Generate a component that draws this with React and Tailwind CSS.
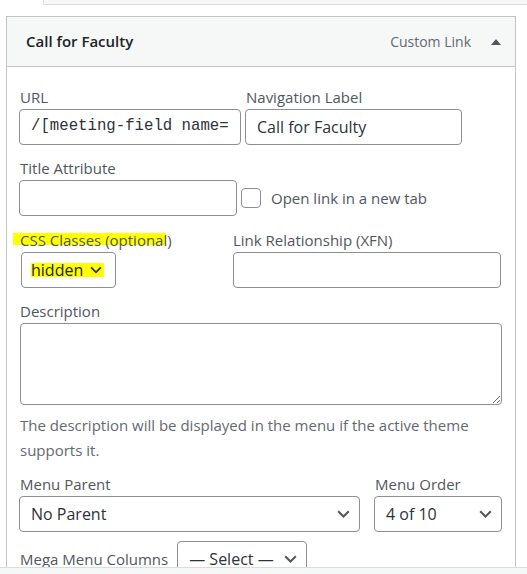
function Chevron({ className = '' }) {
  return (
    <svg width="13" height="8" viewBox="0 0 13 8" className={className} fill="none">
      <polyline points="1.2,1.2 6.5,6.5 11.8,1.2" stroke="currentColor" strokeWidth="2" />
    </svg>
  );
}

function Label({ children, className = '' }) {
  return <div className={`h-[24px] leading-[24px] text-[15px] text-[#50575e] ${className}`}>{children}</div>;
}

function TextBox({ className = '', children, mono = false }) {
  return (
    <div
      className={`h-[36px] rounded-[4px] border border-[#8c8f94] bg-white flex items-center pl-[11px] overflow-hidden whitespace-nowrap text-[#2c3338] ${
        mono ? "font-['Liberation_Mono',monospace] text-[15.7px]" : 'text-[16px]'
      } ${className}`}
    >
      {children}
    </div>
  );
}

function SelectBox({ value, className = '', chevronClass = 'text-[#50575e]' }) {
  return (
    <div
      className={`h-[36px] rounded-[4px] border border-[#8c8f94] bg-white flex items-center justify-between pl-[11px] pr-[9px] text-[16px] text-[#2c3338] whitespace-nowrap ${className}`}
    >
      <span>{value}</span>
      <Chevron className={chevronClass} />
    </div>
  );
}

export default function App() {
  return (
    <div className="relative w-[527px] h-[574px] overflow-hidden bg-white font-['Open_Sans',sans-serif]">
      {/* previous item edge */}
      <div className="ml-[43px] h-[5px] bg-[#f6f7f7] border-l border-b border-[#dcdcde]" />

      <div className="ml-[6px] mt-[11px] w-[510px] border border-[#c3c4c7]">
        {/* header */}
        <div className="h-[50px] bg-[#f6f7f7] border-b border-[#c3c4c7] flex items-center pl-[19px] pr-[14px]">
          <span className="text-[15px] font-semibold text-[#1d2327]">Call for Faculty</span>
          <span className="ml-auto text-[14px] text-[#646970]">Custom Link</span>
          <span className="ml-[20px] w-0 h-0 border-l-[5px] border-r-[5px] border-b-[6px] border-l-transparent border-r-transparent border-b-[#50575e]" />
        </div>

        {/* body */}
        <div className="pl-[12px] pt-[18px] pb-[40px]">
          <div className="flex gap-[4px]">
            <div className="w-[222px]">
              <Label className="ml-px">URL</Label>
              <TextBox mono>/[meeting-field name=</TextBox>
            </div>
            <div className="w-[217px]">
              <Label className="ml-px">Navigation Label</Label>
              <TextBox>Call for Faculty</TextBox>
            </div>
          </div>

          <div className="mt-[11px]">
            <Label className="ml-px">Title Attribute</Label>
            <div className="flex items-center">
              <TextBox className="w-[218px]" />
              <div className="ml-[4px] w-[20px] h-[20px] rounded-[4px] border border-[#8c8f94] bg-white" />
              <span className="ml-[10px] text-[15px] text-[#50575e]">Open link in a new tab</span>
            </div>
          </div>

          <div className="mt-[12px] flex">
            <div className="w-[214px]">
              <div className="relative ml-px">
                <div className="absolute left-[-7px] top-[5px] w-[153px] h-[12px] bg-[#ffff00]" />
                <Label className="relative">CSS Classes (optional)</Label>
              </div>
              <div className="relative ml-[2px] w-[95px] h-[36px] rounded-[4px] border border-[#8c8f94] bg-white">
                <div className="absolute left-[9px] top-[10px] w-[73px] h-[14px] bg-[#ffff00]" />
                <div className="relative h-full flex items-center pl-[9px] text-[16px] text-[#1d2327]">
                  <span>hidden</span>
                  <Chevron className="ml-[7px] w-[12px] text-[#2c3338]" />
                </div>
              </div>
            </div>
            <div className="w-[268px]">
              <Label>Link Relationship (XFN)</Label>
              <TextBox />
            </div>
          </div>

          <div className="mt-[11px]">
            <Label className="ml-px">Description</Label>
            <textarea
              readOnly
              className="block ml-px w-[482px] h-[82px] rounded-[4px] border border-[#8c8f94] bg-white outline-none"
            />
            <p className="mt-[8px] ml-px w-[480px] text-[15px] leading-[25px] text-[#646970]">
              The description will be displayed in the menu if the active theme supports it.
            </p>
          </div>

          <div className="mt-[9px] flex gap-[14px]">
            <div className="w-[341px]">
              <Label className="ml-px">Menu Parent</Label>
              <SelectBox value="No Parent" />
            </div>
            <div className="w-[128px]">
              <Label className="ml-px">Menu Order</Label>
              <SelectBox value="4 of 10" />
            </div>
          </div>

          <div className="mt-[9px] flex items-center">
            <span className="ml-px text-[15px] text-[#50575e]">Mega Menu Columns</span>
            <SelectBox value="— Select —" className="ml-[9px] w-[130px]" />
          </div>
        </div>
      </div>

      {/* sticky footer edge */}
      <div className="absolute left-0 right-0 bottom-0 h-[7px] bg-[#f6f7f7] border-t border-[#dcdcde]" />
    </div>
  );
}
